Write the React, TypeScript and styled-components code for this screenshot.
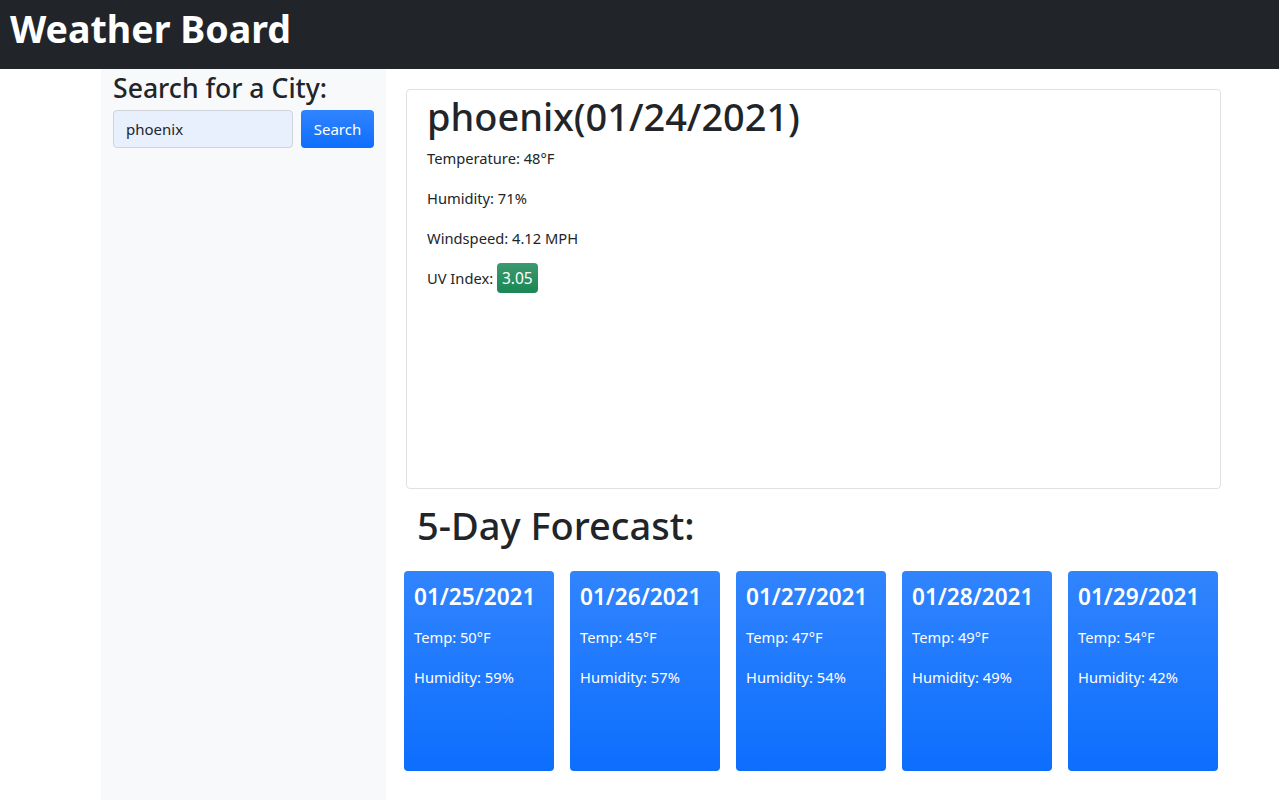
import React, { useState } from 'react';
import styled, { createGlobalStyle } from 'styled-components';

const GlobalStyle = createGlobalStyle`
  * { box-sizing: border-box; }
  body {
    margin: 0;
    font-family: "Noto Sans", "Open Sans", sans-serif;
    color: #212529;
    background: #fff;
  }
`;

const Header = styled.header`
  height: 69px;
  background: #212529;
  display: flex;
  align-items: center;
  padding-left: 10px;
`;

const Title = styled.h1`
  margin: 0;
  color: #fff;
  font-size: 37.6px;
  font-weight: 700;
  line-height: 1;
  padding-bottom: 12px;
`;

const Layout = styled.div`
  display: flex;
  min-height: 731px;
`;

const Sidebar = styled.aside`
  margin-left: 101px;
  width: 285px;
  background: #f8f9fa;
  padding: 0 12px;
`;

const SideHeading = styled.h3`
  margin: 2px 0 5px;
  font-size: 26.6px;
  font-weight: 500;
  line-height: 34px;
`;

const SearchRow = styled.form`
  display: flex;
  gap: 8px;
`;

const Input = styled.input`
  width: 180px;
  height: 38px;
  padding: 6px 12px;
  border: 1px solid #ced4da;
  border-radius: 4px;
  background: #e8f0fe;
  font: inherit;
  font-size: 15px;
  color: #212529;
`;

const Button = styled.button`
  height: 38px;
  width: 73px;
  border: none;
  border-radius: 4px;
  color: #fff;
  font: inherit;
  font-size: 15px;
  background: linear-gradient(180deg, #3184fd, #0d6efd);
`;

const Main = styled.main`
  padding: 20px 0 0 20px;
  width: 835px;
`;

const CurrentCard = styled.section`
  height: 400px;
  border: 1px solid #dee2e6;
  border-radius: 4px;
  padding: 0 20px;
`;

const CityTitle = styled.h1`
  margin: 2px 0 6px;
  font-size: 37.9px;
  font-weight: 500;
  line-height: 48px;
`;

const Stat = styled.p`
  margin: 0 0 16px;
  font-size: 14.7px;
  line-height: 24px;
  height: 24px;
`;

const Badge = styled.span`
  display: inline-block;
  vertical-align: middle;
  margin-top: -4px;
  padding: 3px 5px;
  border-radius: 4px;
  color: #fff;
  font-size: 15.5px;
  line-height: 24px;
  background: linear-gradient(180deg, #3c9a6e, #198754);
`;

const ForecastHeading = styled.h2`
  margin: 12px 0 22px 11px;
  font-size: 38px;
  font-weight: 500;
  line-height: 48px;
`;

const ForecastRow = styled.div`
  display: flex;
  gap: 16px;
  margin-left: -2px;
`;

const DayCard = styled.div`
  width: 150px;
  height: 200px;
  border-radius: 4px;
  padding: 10px 10px;
  color: #fff;
  background: linear-gradient(180deg, #3184fd, #0d6efd);
`;

const DayDate = styled.h3`
  margin: 0 0 12px;
  font-size: 22.6px;
  font-weight: 600;
  line-height: 32px;
`;

const DayStat = styled.p`
  margin: 0 0 16px;
  font-size: 14.7px;
  line-height: 24px;
`;

const forecast = [
  { date: '01/25/2021', temp: 50, humidity: 59 },
  { date: '01/26/2021', temp: 45, humidity: 57 },
  { date: '01/27/2021', temp: 47, humidity: 54 },
  { date: '01/28/2021', temp: 49, humidity: 49 },
  { date: '01/29/2021', temp: 54, humidity: 42 },
];

export default function App() {
  const [city, setCity] = useState('phoenix');

  return (
    <>
      <GlobalStyle />
      <Header>
        <Title>Weather Board</Title>
      </Header>
      <Layout>
        <Sidebar>
          <SideHeading>Search for a City:</SideHeading>
          <SearchRow onSubmit={(e) => e.preventDefault()}>
            <Input value={city} onChange={(e) => setCity(e.target.value)} />
            <Button type="submit">Search</Button>
          </SearchRow>
        </Sidebar>
        <Main>
          <CurrentCard>
            <CityTitle>phoenix(01/24/2021)</CityTitle>
            <Stat>Temperature: 48°F</Stat>
            <Stat>Humidity: 71%</Stat>
            <Stat>Windspeed: 4.12 MPH</Stat>
            <Stat>
              UV Index: <Badge>3.05</Badge>
            </Stat>
          </CurrentCard>
          <ForecastHeading>5-Day Forecast:</ForecastHeading>
          <ForecastRow>
            {forecast.map((d) => (
              <DayCard key={d.date}>
                <DayDate>{d.date}</DayDate>
                <DayStat>Temp: {d.temp}°F</DayStat>
                <DayStat>Humidity: {d.humidity}%</DayStat>
              </DayCard>
            ))}
          </ForecastRow>
        </Main>
      </Layout>
    </>
  );
}
